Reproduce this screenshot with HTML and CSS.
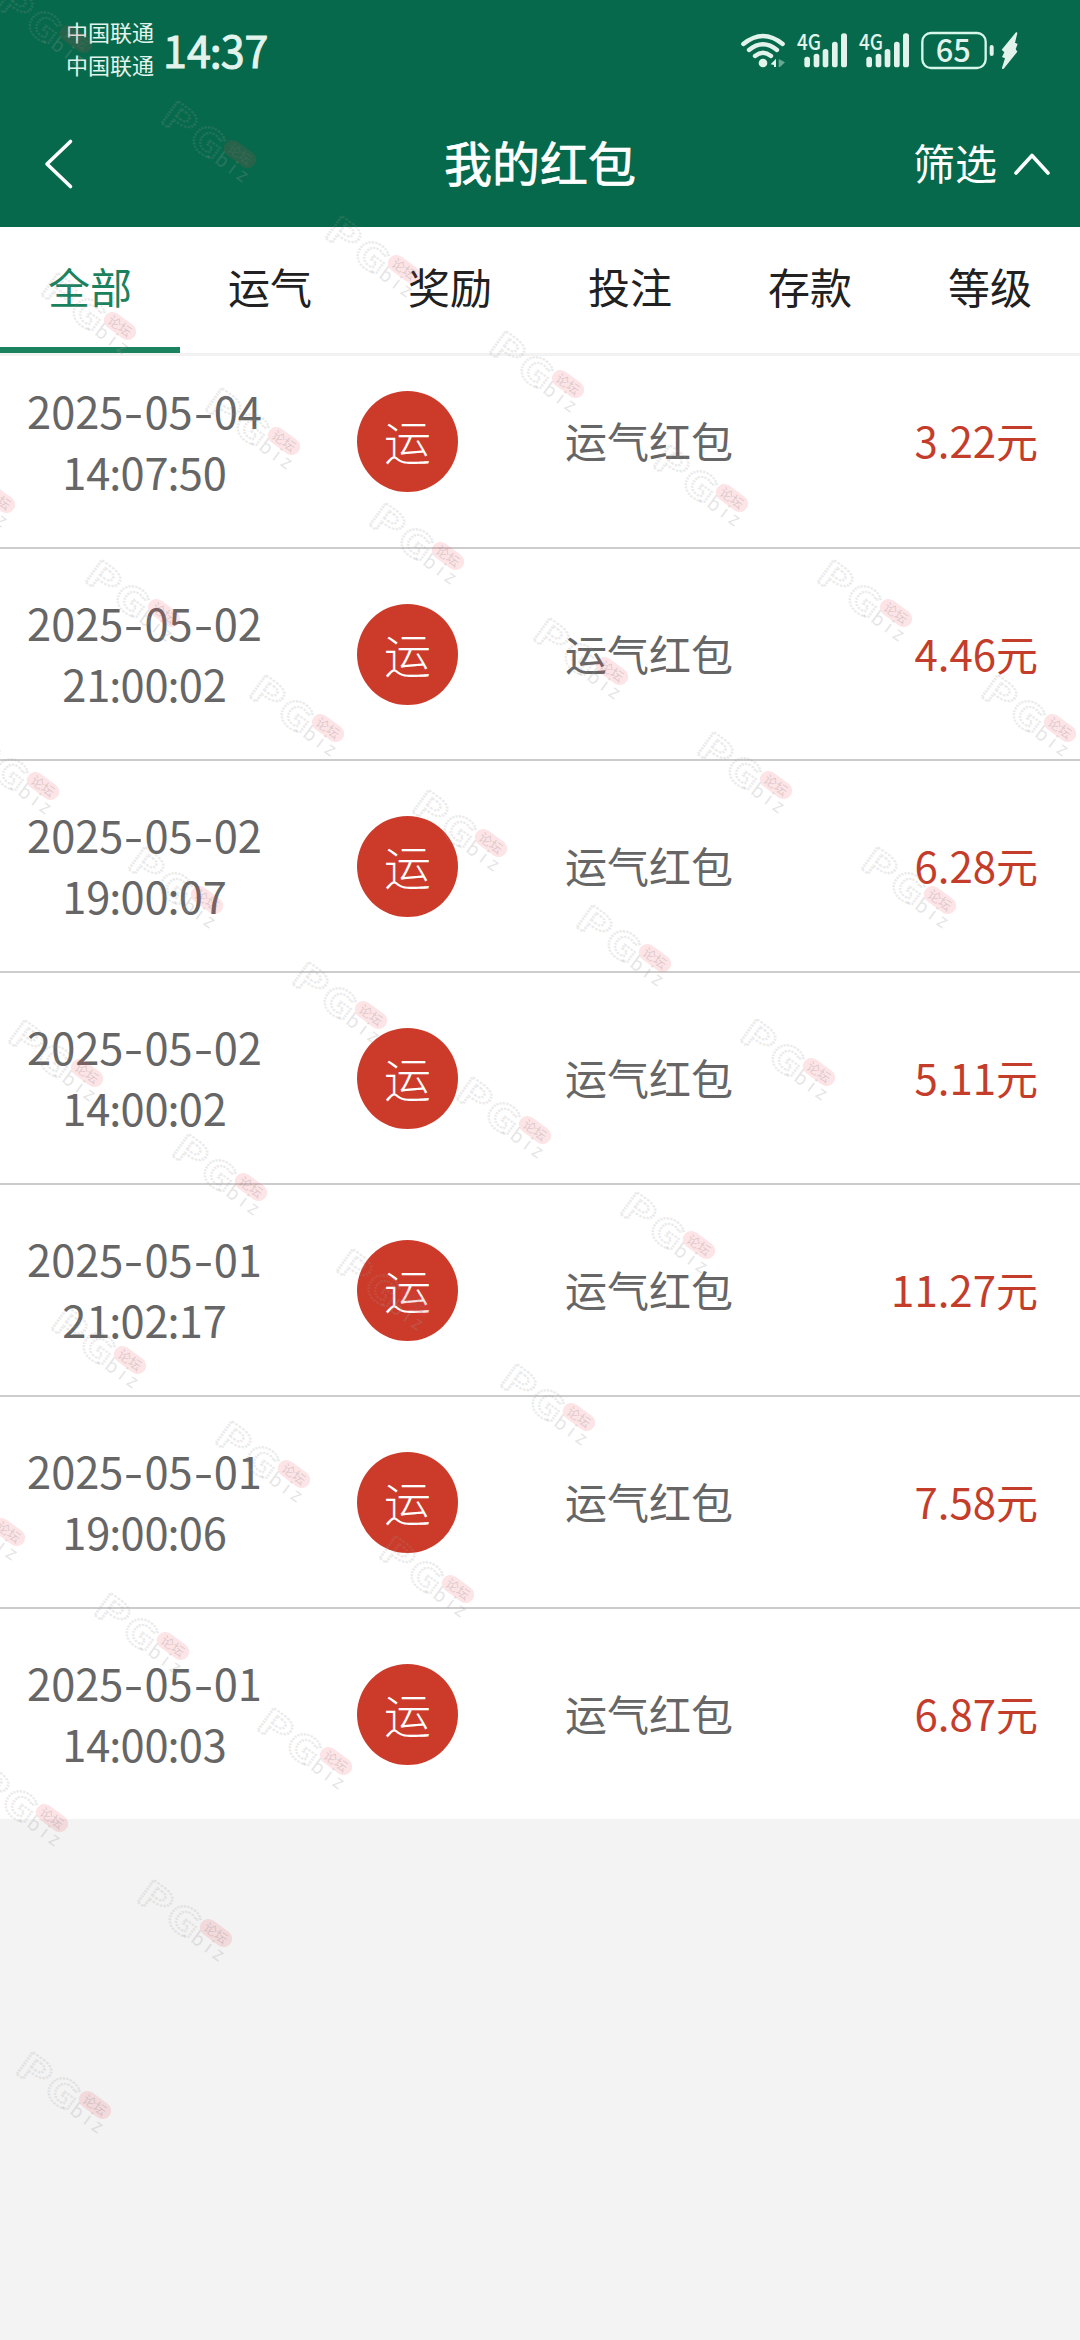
FILE: index.html
```html
<!DOCTYPE html>
<html lang="zh-CN">
<head>
<meta charset="utf-8">
<title>我的红包</title>
<link rel="stylesheet" href="styles.css">
</head>
<body>
<div class="screen">
  <header class="header">
    <div class="status">
      <div class="carriers"><span>中国联通</span><span>中国联通</span></div>
      <div class="clock">14<span class="clock-colon">:</span>37</div>
      <svg class="status-icons" viewBox="0 0 930 240" width="310" height="80" fill="#e2f3ec">
        <g fill="none" stroke="#e2f3ec" stroke-width="13" stroke-linecap="round">
          <path d="M40 102Q99 54 158 102"/>
          <path d="M57 120Q99 86 141 120"/>
          <path d="M75 138Q99 119 123 138"/>
        </g>
        <circle cx="99" cy="159" r="13"/>
        <path d="M122 163L138 146V171H132V165Z"/>
        <path d="M146 147L165 157L150 171H146Z" opacity=".45"/>
        <g id="signal">
          <text class="net" x="201" y="120" textLength="72" lengthAdjust="spacingAndGlyphs">4G</text>
          <rect x="223" y="140" width="17" height="32" rx="8"/>
          <rect x="251" y="131" width="17" height="41" rx="8"/>
          <rect x="278" y="117" width="17" height="55" rx="8"/>
          <rect x="306" y="95" width="17" height="77" rx="8"/>
          <rect x="333" y="70" width="18" height="102" rx="8"/>
        </g>
        <use href="#signal" x="186"/>
        <rect x="577" y="69" width="190" height="105" rx="26" fill="none" stroke="#d6f7ea" stroke-width="7"/>
        <rect x="779" y="105" width="12" height="33" rx="6"/>
        <text class="level" x="617" y="157" textLength="105" lengthAdjust="spacingAndGlyphs">65</text>
        <path d="M858 67Q862 65 862 70L855 98L863 102L857 117L862 125L821 176Q816 179 816 173L825 145L816 141L823 127L815 119Z"/>
      </svg>
    </div>
    <div class="navbar">
      <svg class="back" viewBox="0 0 30 52" width="30" height="52"><path d="M26.500 3.500L3 26L26.500 48.500"/></svg>
      <h1 class="title">我的红包</h1>
      <div class="filter"><span>筛选</span><svg class="caret" viewBox="0 0 40 26" width="40" height="26"><path d="M4 22L20 4.500L36 22"/></svg></div>
    </div>
  </header>
  <nav class="tabs">
    <span class="tab active">全部</span><span class="tab">运气</span><span class="tab">奖励</span><span class="tab">投注</span><span class="tab">存款</span><span class="tab">等级</span>
  </nav>
  <main class="list">
    <div class="row"><div class="when"><span>2025<i class="dash">-</i>05<i class="dash">-</i>04</span><span>14<i class="colon">:</i>07<i class="colon">:</i>50</span></div><div class="badge">运</div><div class="name">运气红包</div><div class="amount">3.22元</div></div>
    <div class="row"><div class="when"><span>2025<i class="dash">-</i>05<i class="dash">-</i>02</span><span>21<i class="colon">:</i>00<i class="colon">:</i>02</span></div><div class="badge">运</div><div class="name">运气红包</div><div class="amount">4.46元</div></div>
    <div class="row"><div class="when"><span>2025<i class="dash">-</i>05<i class="dash">-</i>02</span><span>19<i class="colon">:</i>00<i class="colon">:</i>07</span></div><div class="badge">运</div><div class="name">运气红包</div><div class="amount">6.28元</div></div>
    <div class="row"><div class="when"><span>2025<i class="dash">-</i>05<i class="dash">-</i>02</span><span>14<i class="colon">:</i>00<i class="colon">:</i>02</span></div><div class="badge">运</div><div class="name">运气红包</div><div class="amount">5.11元</div></div>
    <div class="row"><div class="when"><span>2025<i class="dash">-</i>05<i class="dash">-</i>01</span><span>21<i class="colon">:</i>02<i class="colon">:</i>17</span></div><div class="badge">运</div><div class="name">运气红包</div><div class="amount">11.27元</div></div>
    <div class="row"><div class="when"><span>2025<i class="dash">-</i>05<i class="dash">-</i>01</span><span>19<i class="colon">:</i>00<i class="colon">:</i>06</span></div><div class="badge">运</div><div class="name">运气红包</div><div class="amount">7.58元</div></div>
    <div class="row"><div class="when"><span>2025<i class="dash">-</i>05<i class="dash">-</i>01</span><span>14<i class="colon">:</i>00<i class="colon">:</i>03</span></div><div class="badge">运</div><div class="name">运气红包</div><div class="amount">6.87元</div></div>
  </main>
  <svg class="watermark" viewBox="0 0 1080 2340" width="1080" height="2340" aria-hidden="true">
    <defs>
      <g id="mark" transform="rotate(36)">
        <text class="wm-big" x="-86" y="21" textLength="34" lengthAdjust="spacingAndGlyphs">P</text>
        <text class="wm-big" x="-50" y="22" textLength="33" lengthAdjust="spacingAndGlyphs">G</text>
        <rect class="wm-pill" x="-18" y="-8.500" width="36" height="17" rx="8.500"/>
        <text class="wm-cn" x="-13" y="5">论坛</text>
        <text class="wm-biz" x="-27" y="22" textLength="46">.biz</text>
      </g>
    </defs>
    <!-- staggered grid: each step right is (164, 114.75) -->
    <use href="#mark" x="76" y="39"/><use href="#mark" x="240" y="154"/><use href="#mark" x="404" y="269"/><use href="#mark" x="568" y="384"/><use href="#mark" x="732" y="498"/><use href="#mark" x="896" y="613"/><use href="#mark" x="1060" y="728"/>
    <use href="#mark" x="120" y="326"/><use href="#mark" x="284" y="441"/><use href="#mark" x="448" y="556"/><use href="#mark" x="612" y="671"/><use href="#mark" x="776" y="785"/><use href="#mark" x="940" y="900"/>
    <use href="#mark" x="-1" y="499"/><use href="#mark" x="164" y="613"/><use href="#mark" x="328" y="728"/><use href="#mark" x="491" y="843"/><use href="#mark" x="655" y="958"/><use href="#mark" x="819" y="1072"/>
    <use href="#mark" x="43" y="786"/><use href="#mark" x="207" y="900"/><use href="#mark" x="371" y="1015"/><use href="#mark" x="535" y="1130"/><use href="#mark" x="699" y="1245"/>
    <use href="#mark" x="87" y="1073"/><use href="#mark" x="251" y="1187"/><use href="#mark" x="415" y="1302"/><use href="#mark" x="579" y="1417"/>
    <use href="#mark" x="130" y="1360"/><use href="#mark" x="294" y="1474"/><use href="#mark" x="9" y="1532"/>
    <use href="#mark" x="458" y="1589"/><use href="#mark" x="173" y="1646"/><use href="#mark" x="336" y="1761"/>
    <use href="#mark" x="52" y="1818"/><use href="#mark" x="216" y="1933"/>
    <use href="#mark" x="95" y="2105"/>
  </svg>
</div>
</body>
</html>
```
FILE: styles.css
```css
* { box-sizing: border-box; }
body {
  margin: 0;
  background: #f3f3f3;
  font-family: "Noto Sans CJK SC", sans-serif;
}
.screen {
  position: relative;
  width: 1080px;
  height: 2340px;
  overflow: hidden;
}
.header {
  height: 227px;
  background: #06694b;
  color: #fff;
}
.status {
  display: flex;
  height: 100px;
  color: #e2f3ec;
}
.carriers {
  display: flex;
  flex-direction: column;
  padding: 15px 0 0 66px;
  font-size: 22px;
  line-height: 33px;
}
.clock {
  padding-left: 9px;
  font-size: 43px;
  line-height: 99px;
  -webkit-text-stroke: 1px #e2f3ec;
}
.clock-colon { margin: 0 -1px; }
.status-icons {
  margin: 10px 40px 0 auto;
}
.net { font-size: 64px; font-weight: 500; }
.level { font-size: 94px; font-weight: 500; }
.navbar {
  display: grid;
  grid-template-columns: 1fr auto 1fr;
  align-items: center;
  height: 127px;
}
.back { margin-left: 44px; }
.back path, .caret path {
  fill: none;
  stroke: #fff;
  stroke-width: 3.6;
  stroke-linecap: round;
  stroke-linejoin: round;
}
.title {
  margin: 0;
  padding-bottom: 4px;
  font-size: 48px;
  font-weight: 400;
  line-height: 123px;
  -webkit-text-stroke: .7px #fff;
}
.filter {
  display: flex;
  align-items: center;
  justify-content: flex-end;
  gap: 15px;
  padding-right: 28px;
  font-size: 42px;
}
.filter span { padding-bottom: 4px; }
.tabs {
  display: grid;
  grid-template-columns: repeat(6, 1fr);
  height: 129px;
  background: #fff;
  border-bottom: 3px solid #f2f2f2;
}
.tab {
  border-bottom: 6px solid transparent;
  color: #212121;
  font-size: 42px;
  line-height: 117px;
  text-align: center;
}
.tab.active {
  border-color: #1b8260;
  color: #1b8260;
}
.row {
  display: grid;
  grid-template-columns: 289px 237px 1fr auto;
  align-items: center;
  height: 212px;
  padding-right: 42px;
  border-bottom: 2px solid #ccc;
  background: #fff;
  color: #666;
  font-size: 42px;
}
.row:first-child { height: 193px; padding-bottom: 20px; }
.row:last-child { border-bottom-color: #f3f3f3; }
.when {
  display: flex;
  flex-direction: column;
  align-items: center;
  padding-bottom: 2px;
  font-size: 43.4px;
  line-height: 61px;
}
.dash {
  display: inline-block;
  margin: 0 3px;
  font-style: normal;
  transform: scaleX(1.3);
}
.colon {
  margin: 0 -1px;
  font-style: normal;
}
.badge {
  width: 101px;
  height: 101px;
  margin-left: 68px;
  border-radius: 50%;
  background: #cc3b2a;
  color: #fff;
  font-size: 47px;
  font-weight: 300;
  line-height: 97px;
  text-align: center;
}
.name { padding: 0 0 4px 39px; }
.amount { padding-bottom: 4px; color: #c43d2b; }
.watermark {
  position: absolute;
  top: 0;
  left: 0;
  pointer-events: none;
}
.wm-big {
  fill: none;
  stroke: #999;
  stroke-opacity: .2;
  stroke-width: 2.2;
  stroke-dasharray: 2 1;
  font-size: 37px;
  font-weight: 700;
}
.wm-pill { fill: #f04050; fill-opacity: .14; }
.wm-cn { font-size: 13px; fill: #777; fill-opacity: .25; }
.wm-biz { font-size: 19px; fill: #999; fill-opacity: .25; }
```
